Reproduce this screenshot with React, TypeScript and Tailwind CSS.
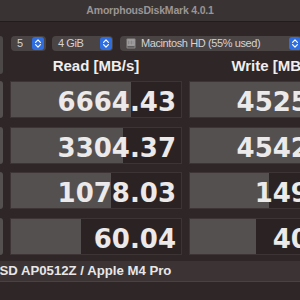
import React from "react";

const rows = [
  { name: "SEQ1M", qd: "QD8", read: "6664.43", write: "4525.18", rw: 120, ww: 116 },
  { name: "SEQ1M", qd: "QD1", read: "3304.37", write: "4542.79", rw: 112, ww: 116 },
  { name: "RND4K", qd: "QD64", read: "1078.03", write: "149.62", rw: 100, ww: 79 },
  { name: "RND4K", qd: "QD1", read: "60.04", write: "40.27", rw: 70, ww: 66 },
];

function Stepper() {
  return (
    <div className="w-[12px] h-[13px] rounded-[3px] bg-[#2f6ee0] flex items-center justify-center shrink-0">
      <svg width="12" height="13" viewBox="0 0 12 13">
        <path
          d="M3.6 5.3 6 2.9 8.4 5.3M3.6 7.7 6 10.1 8.4 7.7"
          fill="none"
          stroke="#ffffff"
          strokeWidth="1.2"
          strokeLinecap="round"
          strokeLinejoin="round"
        />
      </svg>
    </div>
  );
}

function DiskIcon() {
  return (
    <svg width="10" height="11" viewBox="0 0 10 11" className="shrink-0">
      <rect x="0.5" y="0.5" width="9" height="10" rx="1" fill="#8c8a8a" />
      <rect x="1.5" y="1.5" width="7" height="6" fill="#a9a7a7" />
      <path d="M2.5 2.5v4M4 2.5v4M5.5 2.5v4M7 2.5v4" stroke="#7a7878" strokeWidth="0.7" />
      <rect x="1.5" y="8" width="7" height="1.6" fill="#5e5c5c" />
    </svg>
  );
}

function Cell({ value, width }: { value: string; width: number }) {
  return (
    <div className="relative w-[172px] h-full shrink-0 bg-[#2b2323] border border-[#3d3535] flex items-center justify-end pr-[5px] pt-[5px] overflow-hidden">
      <div className="absolute left-0 top-0 bottom-0 bg-[#545050]" style={{ width }} />
      <span className="relative text-[26px] leading-none font-bold text-[#ebe9e9] font-['DejaVu_Sans',sans-serif] whitespace-nowrap">
        {value}
      </span>
    </div>
  );
}

export default function App() {
  return (
    <div className="w-[300px] h-[300px] overflow-hidden bg-[#2f2727] font-['Liberation_Sans',Arial,sans-serif]">
      <div className="h-[22px] flex items-center justify-center bg-[#3a3333] border-b border-[#221c1c]">
        <span className="text-[10.5px] tracking-[-0.2px] font-bold text-[#9b9595] whitespace-nowrap">
          AmorphousDiskMark 4.0.1
        </span>
      </div>
      <div className="ml-[-87px] w-[448px] flex flex-col pt-[14px]">
        <div className="flex gap-[7px] h-[45px]">
          <div className="w-[90px] h-[38px] shrink-0 rounded-[3px] bg-[#4d4848] flex items-center justify-center text-[14px] font-bold text-[#e6e6e6]">
            All
          </div>
          <div className="flex flex-col w-[351px]">
            <div className="flex h-[15px] pl-[1px] text-[11px] tracking-[-0.4px] text-[#d6d2d2]">
              <div className="w-[35px] h-[15px] rounded-[4px] bg-[#4a4444] flex items-center justify-between pl-[6px] pr-[2px]">
                <span>5</span>
                <Stepper />
              </div>
              <div className="ml-[6px] w-[61px] h-[15px] rounded-[4px] bg-[#4a4444] flex items-center justify-between pl-[6px] pr-[1px]">
                <span className="whitespace-nowrap">4 GiB</span>
                <Stepper />
              </div>
              <div className="ml-[7px] w-[182px] h-[15px] rounded-[4px] bg-[#4a4444] flex items-center pl-[6px] pr-[1px]">
                <DiskIcon />
                <span className="ml-[5px] whitespace-nowrap">Macintosh HD (55% used)</span>
                <span className="ml-auto">
                  <Stepper />
                </span>
              </div>
            </div>
            <div className="h-[30px] grid grid-cols-2 gap-[7px] w-[351px] text-[15px] font-bold text-[#f0eeee]">
              <div className="flex items-center justify-center whitespace-nowrap">Read [MB/s]</div>
              <div className="flex items-center justify-center whitespace-nowrap">Write [MB/s]</div>
            </div>
          </div>
        </div>
        <div className="flex flex-col gap-[8.5px]">
          {rows.map((r, i) => (
            <div key={i} className="flex gap-[7px] h-[37px]">
              <div className="w-[90px] h-full shrink-0 rounded-[3px] bg-[#545050] flex flex-col items-center justify-center text-[12px] font-bold text-[#e6e6e6] leading-tight">
                <span>{r.name}</span>
                <span>{r.qd}</span>
              </div>
              <Cell value={r.read} width={r.rw} />
              <Cell value={r.write} width={r.ww} />
            </div>
          ))}
        </div>
        <div className="mt-[6.5px] h-[21px] bg-[#3c3434] border-b border-[#4a4242] flex items-center pl-[30px]">
          <span className="text-[13.2px] font-bold text-[#e8e6e6] whitespace-nowrap">
            APPLE SSD AP0512Z / Apple M4 Pro
          </span>
        </div>
      </div>
    </div>
  );
}
